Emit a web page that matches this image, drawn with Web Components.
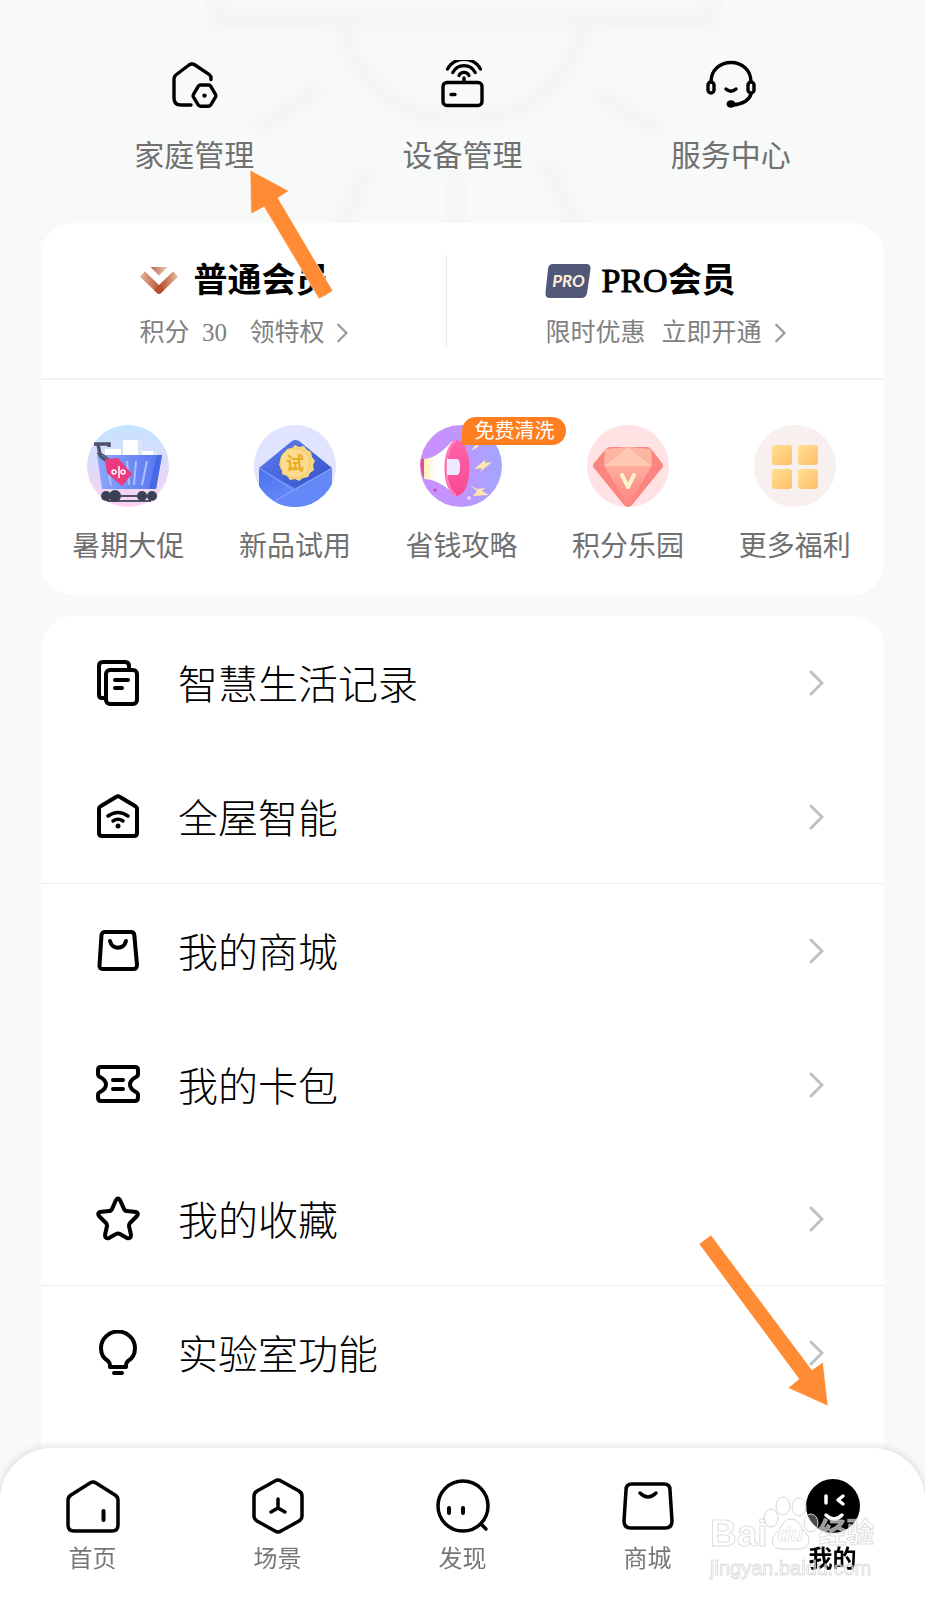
<!DOCTYPE html>
<html lang="zh-CN">
<head>
<meta charset="utf-8">
<meta name="viewport" content="width=device-width, initial-scale=1">
<title>我的</title>
<style>
  body { margin: 0; background: #f9f9f9; font-family: "Liberation Serif", "Noto Sans CJK SC", serif; font-weight: 400; color: #000; }
</style>
</head>
<body>
<mine-page></mine-page>

<script>
const ICONS = {
  family: ['0 0 50 50', `<g fill="none" stroke="#000" stroke-width="3.4" stroke-linecap="round" stroke-linejoin="round"><path d="M42 19.5V18q0-2-1.6-3.3L26 5q-3-2-6 0L6.8 15Q5 16.500 5 19v19q0 7 7 7h10"/><path d="M31.500 25h8q1.500 0 2.300 1.300l4.700 8q.8 1.400 0 2.800l-4.700 7.800q-.8 1.300-2.300 1.300h-8q-1.500 0-2.300-1.300l-4.700-7.800q-.8-1.400 0-2.800l4.700-8q.8-1.300 2.300-1.300z"/></g><circle cx="35.500" cy="35.600" r="2.200"/>`],
  router: ['0 0 50 50', `<g fill="none" stroke="#000" stroke-width="3.400" stroke-linecap="round"><rect x="6" y="22.500" width="39" height="23" rx="4"/><path d="M27 18v4M14 34.500h4"/><path d="M22 15.500a5.500 5.500 0 0 1 10 0M15.800 12.500a12.500 12.500 0 0 1 22.400 0M10.500 9a19 19 0 0 1 33 0" stroke-width="3.200"/></g>`],
  headset: ['0 0 50 50', `<g fill="none" stroke="#000" stroke-width="3.400" stroke-linecap="round"><path d="M5 22C5 10 14 2.500 25 2.500S45 10 45 22M45 34c-2 7-9 10-18 11"/><rect x="2" y="22" width="6" height="11" rx="3"/><rect x="42" y="22" width="6" height="11" rx="3"/><path d="M20 29q5 4.500 10 0"/></g><ellipse cx="25" cy="44" rx="4.500" ry="3.800"/>`],
  medal: ['0 0 38 28', `<defs><linearGradient id="a"><stop stop-color="#e5b29c"/><stop offset=".55" stop-color="#b9532e"/><stop offset="1" stop-color="#e8bba5"/></linearGradient><linearGradient id="b"><stop stop-color="#b9674a"/><stop offset="1" stop-color="#e9cabb"/></linearGradient></defs><path fill="url(#a)" d="M5 4.500 19 18 33 4.500l4.500 4.500q.5.700 0 1.300L21 26q-2 1.800-4 0L.500 10.300Q0 9.700.5 9z"/><path fill="url(#b)" d="M10.500 0h17L19 8.500z"/><path fill="#bb4f2b" d="m19 18-5 5 3 3q2 1.800 4 0l3-3z"/>`],
  proplate: ['0 0 46 34', `<path fill="#505778" d="M8 0h33q5 0 4.500 5L42 29q-.7 5-6 5H5q-5 0-4.500-5L3 5q.5-5 5-5z"/>`],
  cart: ['0 0 82 82', `<defs><linearGradient id="c" x2="0" y2="1"><stop stop-color="#c4e3ff"/><stop offset=".5" stop-color="#dcdcfb"/><stop offset="1" stop-color="#ffd2ef"/></linearGradient><linearGradient id="d"><stop stop-color="#8ca7fb"/><stop offset="1" stop-color="#5474f0"/></linearGradient></defs><circle cx="41" cy="41" r="41" fill="url(#c)"/><path d="M18 24h16v8H18zM53 26h15v6H53z" fill="#fff"/><path fill="#fff" d="M36 15h15v16H36z"/><path fill="#dce5f8" d="M51 15h4v16h-4zM66 26h3v5h-3z"/><path fill="url(#d)" d="M10 30h65l-6 34H15z"/><path fill="#4869e7" d="M70 30h5l-6 34h-7z"/><path d="m21 44 3 16M40 36l2 24M49 36l-2 24M60 36l-5 24" stroke="#aebfff" stroke-width="2"/><g fill="none" stroke="#4f526b"><path d="M22 22v-3H7m4 0 2 11q1 3 10 7" stroke-width="3.500"/><path d="M10 29q4-3 14 8" stroke-width="1.500"/><path d="M17 71h49M20 76h44" stroke-width="2"/></g><path fill="#ec397f" d="m18 34 13-1 14 16-10 12-15-13z"/><g fill="none" stroke="#fff" stroke-width="1.500"><circle cx="27" cy="47" r="2"/><circle cx="36" cy="47" r="2"/><path d="M32 41v12"/></g><g fill="#3c4056"><circle cx="19" cy="71" r="5"/><circle cx="28" cy="71" r="6"/><circle cx="55" cy="71" r="5"/><circle cx="65" cy="71" r="5"/></g>`],
  mail: ['0 0 82 82', `<defs><linearGradient id="e" x2="1" y2="1"><stop stop-color="#5f80f0"/><stop offset="1" stop-color="#3450c4"/></linearGradient><linearGradient id="f" x2="1" y2="1"><stop stop-color="#4d70ef"/><stop offset="1" stop-color="#729bff"/></linearGradient><clipPath id="k"><circle cx="41" cy="41" r="41"/></clipPath></defs><circle cx="41" cy="41" r="41" fill="#e0e4ff"/><g clip-path="url(#k)"><path fill="url(#e)" d="M5 43 38 16q3-2 7 0l33 27v20H5z"/><path fill="#fad782" d="m41 20 4 2 5-1 3 4 4 2 1 5 3 4-2 4 1 5-4 3-2 4-5 1-4 3-4-2-5 1-3-4-5-2v-5l-3-4 2-4v-5l4-3 2-4 5-1z"/><circle cx="41" cy="38" r="15" fill="#fbdc8f" stroke="#f1c964"/><path fill="url(#f)" d="m5 43 36 20 37-20v39H5z"/><path fill="#6488f8" d="M20 76 78 43v39H20z"/><path d="m21 76 57-33M5 43l33 21" stroke="#90a8ff" fill="none"/></g>`],
  horn: ['0 0 82 82', `<defs><linearGradient id="g"><stop stop-color="#cc8eff"/><stop offset=".5" stop-color="#bd97fd"/><stop offset="1" stop-color="#a3a5ff"/></linearGradient><linearGradient id="h"><stop stop-color="#e9508a"/><stop offset=".1" stop-color="#e9508a"/><stop offset=".13" stop-color="#fff3b8"/><stop offset=".5" stop-color="#fff"/></linearGradient><linearGradient id="i" x2="0" y2="1"><stop stop-color="#ff65aa"/><stop offset="1" stop-color="#f84890"/></linearGradient></defs><circle cx="41" cy="41" r="41" fill="url(#g)"/><path fill="url(#h)" d="M1 34q15 1 31-18v51Q17 54 4 54-1 44 1 34z"/><ellipse cx="37" cy="43" rx="12.500" ry="28" fill="url(#i)"/><path fill="none" stroke="#ff84ba" stroke-width="2" d="M36 16c-13 5-13 49 0 54"/><path fill="#eee9ff" d="M27 34h10q3 0 3 8t-3 8H27z"/><g fill="#ffe7ac"><path d="m58 17-7 9 7-4z"/><path d="m65 35-11 9 8-1-2 4 12-10-7 1zM50 60l7 6-4 5 16-1-7-4 3-3-8 1z"/></g><circle cx="49" cy="73" r="2" fill="#f2c9ff"/><circle cx="15" cy="65" r="1.500" fill="#d03da0"/>`],
  gem: ['0 0 82 82', `<defs><linearGradient id="j" x2="0" y2="1"><stop stop-color="#ffc0aa"/><stop offset="1" stop-color="#ff8380"/></linearGradient></defs><circle cx="41" cy="41" r="41" fill="#ffe2e3"/><path fill="#fb8581" d="m23 22h37q3 0 5 3l10 13q2 3 0 5L45 80q-4 4-8 0L7 43q-2-2 0-5l11-13q2-3 5-3z"/><path fill="url(#j)" d="m41 22 24 18-24 42-24-42z"/><path fill="#ffb6a1" d="m18 24 23-2-24 18zM64 24l-23-2 24 18z"/><path fill="#ffc8b5" d="m41 22 24 19H17z"/><path fill="none" stroke="#fff4ce" stroke-width="4" stroke-linecap="round" stroke-linejoin="round" d="m35 50 6 12 6-12"/>`],
  grid: ['0 0 82 82', `<defs><linearGradient id="l" x2="1" y2="1"><stop stop-color="#ffe194"/><stop offset="1" stop-color="#ffbd67"/></linearGradient></defs><circle cx="41" cy="41" r="41" fill="#f8f0ee"/><g fill="url(#l)"><rect x="18" y="20" width="20" height="20" rx="3"/><rect x="44" y="20" width="20" height="20" rx="3"/><rect x="18" y="44" width="20" height="20" rx="3"/><rect x="44" y="44" width="20" height="20" rx="3"/></g>`],
  records: ['0 0 44 46', `<g fill="none" stroke="#000" stroke-width="4" stroke-linecap="round" stroke-linejoin="round"><rect x="10" y="10" width="31" height="34" rx="4"/><path d="M8 38H6q-3 0-3-3V6q0-4 4-4h22q4 0 4 4v3M19 20h13M19 28h7"/></g>`],
  smarthome: ['0 0 44 46', `<g fill="none" stroke="#000" stroke-width="4" stroke-linecap="round" stroke-linejoin="round"><path d="M3 39V15q0-2 2-3L20 3q2-1.500 4 0l15 9q2 1 2 3v24q0 3-3 3H6q-3 0-3-3z"/><path d="M12 22q10-7 20 0M17 27q5-3.500 10 0" stroke-width="3.500"/></g><circle cx="22" cy="32" r="2.500"/>`],
  bag: ['0 0 44 46', `<g fill="none" stroke="#000" stroke-width="4" stroke-linecap="round" stroke-linejoin="round"><path d="M9 4h26q3 0 3.300 3L41 37q.3 4-4 4H7q-4 0-3.500-4L5.500 7Q6 4 9 4z"/><path d="M14 13c2 9 14 9 16 0"/></g>`],
  ticket: ['0 0 44 46', `<g fill="none" stroke="#000" stroke-width="4" stroke-linecap="round" stroke-linejoin="round"><path d="M5 5h34q3 0 3 3v4q0 2-2 3-6 3-6 7.500t6 7.500q2 1 2 3v2q0 4-3 4H5q-3 0-3-4v-2q0-2 2-3 6-3 6-7.500T4 15q-2-1-2-3V8q0-3 3-3zM17 18h10M17 27h10"/></g>`],
  star: ['0 0 44 46', `<path fill="none" stroke="#000" stroke-width="4" stroke-linejoin="round" d="M20 4q2-3 4 0l4 9q1 2 3 2l9 1q3 1 1 4l-7 7q-1 1-1 3l2 9q0 4-4 3l-7-4q-2-1-4 0l-7 4q-4 1-4-3l2-9q0-2-1-3l-7-7q-2-3 1-4l9-1q2 0 3-2z"/>`],
  bulb: ['0 0 44 46', `<g fill="none" stroke="#000" stroke-width="4" stroke-linecap="round" stroke-linejoin="round"><path d="M14 37v-2q0-2-2-4C7 28 5 23 5 18a17 16.500 0 0 1 34 0c0 5-2 10-7 13q-2 2-2 4v2zM18 43h8"/></g>`],
  chevron: ['0 0 16 26', `<path fill="none" stroke="currentColor" stroke-width="3" stroke-linecap="round" stroke-linejoin="miter" d="M3 2 14 13 3 24"/>`],
  home: ['0 0 56 56', `<g fill="none" stroke="#000" stroke-width="3.500" stroke-linecap="round" stroke-linejoin="round"><path d="M3 47V22q0-3 3-5L25 5q3-2 6 0l19 12q3 2 3 5v25q0 6-6 6H9q-6 0-6-6z"/><path d="M38.500 33v9" stroke-width="4"/></g>`],
  scene: ['0 0 56 56', `<g fill="none" stroke="#000" stroke-width="3.500" stroke-linecap="round" stroke-linejoin="round"><path d="m31 3 18 10q3 2 3 5v20q0 3-3 5L31 53q-3 2-6 0L7 43q-3-2-3-5V18q0-3 3-5L25 3q3-2 6 0z"/><path d="M28 21v9l-7 4m7-4 7 4" stroke-width="3.500"/></g>`],
  discover: ['0 0 56 56', `<g fill="none" stroke="#000" stroke-width="3.500" stroke-linecap="round"><circle cx="28" cy="28" r="25"/><path d="M14 30v5M28 30v5" stroke-width="4"/><path d="m46 46 5 5"/></g>`],
  shop: ['0 0 56 56', `<g fill="none" stroke="#000" stroke-width="3.500" stroke-linecap="round" stroke-linejoin="round"><path d="M12 6h32q6 0 6 6l2 31q0 7-7 7H11q-7 0-7-7l2-31q0-6 6-6z"/><path d="M20 15q8 8 16 0"/></g>`],
  me: ['0 0 56 56', `<circle cx="28" cy="28" r="27"/><g fill="none" stroke="#fff" stroke-width="3.500" stroke-linecap="round" stroke-linejoin="round"><path d="M21 18v7M38 18l-5 4 5 4M21 37q8 8 16 0"/></g>`]
};

const define = (name, html, fill) => customElements.define(name, class extends HTMLElement {
  constructor() {
    super();
    this.attachShadow({ mode: 'open' }).innerHTML = html;
  }
  connectedCallback() { if (fill) fill(this, this.shadowRoot); }
});

define('ui-icon', `<style>:host{display:block;flex:none}svg{display:block;width:100%;height:100%}</style><svg aria-hidden="true"></svg>`, (host, root) => {
  const [box, art] = ICONS[host.getAttribute('name')];
  const svg = root.querySelector('svg');
  svg.setAttribute('viewBox', box);
  svg.innerHTML = art;
});

const setIcon = (host, root) => {
  const icon = document.createElement('ui-icon');
  icon.setAttribute('name', host.getAttribute('icon'));
  root.querySelector('.icon').append(icon);
};

define('quick-link', `<style>
  :host{display:block}
  a{display:flex;flex-direction:column;align-items:center;gap:26px;color:#707070;text-decoration:none;font-size:30px;line-height:40px}
  .icon{width:50px;height:50px}
</style><a href="#"><span class="icon"></span><slot></slot></a>`, setIcon);

define('page-header', `<style>
  :host{display:block;position:relative;background:linear-gradient(90deg,#f9f9f9,#f7faf9 20%,#f7faf9 80%,#f9f9f9)}
  nav{position:relative;display:grid;grid-template-columns:repeat(3,1fr);padding:60px 60px 47px}
  svg{position:absolute;inset:0;width:100%;height:100%}
</style>
<svg viewBox="0 0 925 223" preserveAspectRatio="xMidYMin slice" aria-hidden="true">
  <defs><filter id="soft"><feGaussianBlur stdDeviation="6"/></filter></defs>
  <g filter="url(#soft)" fill="none" stroke="#f3f4f4" stroke-width="14">
    <path fill="#f9f9f9" d="M342 18v-10a121 112 0 0 0 242 0v10"/>
    <path fill="#f9f9f9" d="M216-20V18H712V-20"/>
    <path d="m321 88-66 42M592 92l70 40M366 170l-24 60M456 170v60M546 160l32 70"/>
  </g>
</svg>
<nav><slot></slot></nav>`);

define('member-tier', `<style>
  :host{display:flex;justify-content:center}
  a{display:block;padding-top:4px;color:#000;text-decoration:none}
  .head{display:flex;align-items:center;gap:16px}
  :host([pro]) .head{gap:10px}
  .icon{width:38px;height:28px;display:grid;place-items:center}
  :host([pro]) .icon{width:46px;height:34px}
  .icon ui-icon{grid-area:1/1;width:100%}
  .mark{display:none;position:relative;z-index:1;grid-area:1/1;font:italic 700 17px/34px Lato,sans-serif;color:#fff0d8}
  :host([pro]) .mark{display:block}
  b{font-size:34px;line-height:44px;font-weight:700}
  .sub{display:flex;align-items:center;gap:16px;margin-top:12px;font-size:25px;line-height:36px;color:#808080}
  .sub ui-icon{width:12px;height:20px;margin-left:-4px;color:#999}
</style>
<a href="#"><div class="head"><span class="icon"><span class="mark">PRO</span></span><b><slot name="title"></slot></b></div>
<div class="sub"><slot name="left"></slot><slot name="right"></slot><ui-icon name="chevron"></ui-icon></div></a>`, setIcon);

define('perk-link', `<style>
  :host{display:block}
  a{display:flex;flex-direction:column;align-items:center;gap:20px;color:#707070;text-decoration:none;font-size:28px;line-height:40px}
  .icon{position:relative;width:82px;height:82px}
  .badge,.seal{display:none;position:absolute;white-space:nowrap}
  :host([badge]) .badge{display:block;left:42px;top:-8px;padding:0 12px;border-radius:14px 14px 14px 2px;background:#ff7f20;color:#fff;font-size:20px;line-height:28px}
  :host([seal]) .seal{display:block;inset:0;text-align:center;color:#e9ab20;font-size:18px;font-weight:700;line-height:78px}
</style><a href="#"><span class="icon"><span class="badge"></span><span class="seal"></span></span><slot></slot></a>`, (host, root) => {
  const icon = document.createElement('ui-icon');
  icon.setAttribute('name', host.getAttribute('icon'));
  root.querySelector('.icon').prepend(icon);
  root.querySelector('.badge').textContent = host.getAttribute('badge') || '';
  root.querySelector('.seal').textContent = host.getAttribute('seal') || '';
});

define('member-card', `<style>
  :host{display:block;background:#fff;border-radius:32px}
  .tiers{display:grid;grid-template-columns:406fr 437fr;padding:32px 0 31px;border-bottom:2px solid #f1f2f3}
  .tiers ::slotted(*){height:92px}
  .tiers ::slotted([pro]){box-shadow:-1px 0 #e9e9e9}
  .perks{display:grid;grid-template-columns:repeat(5,1fr);padding:45px 6px 28px 4px}
</style><div class="tiers"><slot name="tier"></slot></div><div class="perks"><slot></slot></div>`);

define('menu-row', `<style>
  :host{display:block}
  :host([divided]){box-shadow:0 -1px #ededee}
  a{display:flex;align-items:center;height:134px;padding:0 60px 0 55px;color:#000;text-decoration:none;font-size:40px;font-weight:300;line-height:56px}
  .icon{width:44px;height:46px;margin-right:38px}
  .text{padding-top:6px}
  .chev{width:16px;height:26px;margin-left:auto;color:#bfc0c3}
</style><a href="#"><span class="icon"></span><span class="text"><slot></slot></span><ui-icon class="chev" name="chevron"></ui-icon></a>`, setIcon);

define('menu-card', `<style>:host{display:block;background:#fff;border-radius:32px 32px 0 0;padding-bottom:178px;box-sizing:border-box}</style><slot></slot>`);

define('tab-item', `<style>
  :host{display:block}
  a{display:flex;flex-direction:column;align-items:center;gap:8px;color:#777;text-decoration:none;font-size:24px;line-height:34px}
  :host([active]) a{color:#000;font-weight:700}
  .icon{width:56px;height:56px}
</style><a href="#"><span class="icon"></span><slot></slot></a>`, setIcon);

define('tab-bar', `<style>
  :host{position:fixed;left:0;right:0;bottom:0;background:#fff;border-radius:52px 52px 0 0;box-shadow:0 -1px 8px rgba(0,0,0,.14)}
  nav{display:grid;grid-template-columns:repeat(5,1fr);padding:30px 0 24px}
</style><nav><slot></slot></nav>`);

define('arrow-mark', `<style>:host{position:absolute;z-index:3;pointer-events:none}svg{display:block;overflow:visible}</style><svg aria-hidden="true"><polygon fill="#ff8c35" stroke="#fff" stroke-opacity=".6" stroke-width="1"/></svg>`, (host, root) => {
  const svg = root.querySelector('svg');
  svg.setAttribute('width', host.getAttribute('width'));
  svg.setAttribute('height', host.getAttribute('height'));
  root.querySelector('polygon').setAttribute('points', host.getAttribute('points'));
});

define('water-mark', `<style>
  :host{position:fixed;right:50px;bottom:20px;width:165px;z-index:4;pointer-events:none;font-family:"Liberation Sans","Noto Sans CJK SC",sans-serif;color:rgba(255,255,255,.6);-webkit-text-stroke:1px rgba(200,200,200,.6)}
  .brand{display:flex;align-items:center;font-size:37px;font-weight:700;line-height:36px}
  .paw{position:relative;display:grid;place-items:center;width:46px;height:36px;font-size:21px;font-style:italic}
  .paw svg{position:absolute;left:-6px;bottom:2px;width:58px;height:54px}
  .cn{font-size:28px;margin-left:5px}
  .url{font-size:20px;line-height:24px;margin-top:4px}
</style>
<div class="brand"><span>Bai</span><span class="paw"><svg viewBox="0 0 58 54" fill="#fff" fill-opacity=".3" stroke="#d4d4d4" aria-hidden="true"><ellipse cx="9" cy="22" rx="7" ry="9"/><ellipse cx="21" cy="10" rx="7" ry="9"/><ellipse cx="37" cy="11" rx="7" ry="9"/><ellipse cx="49" cy="27" rx="7" ry="9"/><path d="M29 23c8 0 9 8 15 14 7 8 1 17-8 16H20c-11 0-12-10-6-16 6-5 7-14 15-14z"/></svg><span>du</span></span><span class="cn">经验</span></div>
<div class="url">jingyan.baidu.com</div>`);

define('mine-page', `<style>
  :host{display:flex;flex-direction:column;min-height:100vh;position:relative}
  main{flex:1;display:flex;flex-direction:column;gap:21px;padding:0 41px}
  menu-card{flex:1}
  .latin{font-weight:400;-webkit-text-stroke:1px #000}
  .to-family{left:250px;top:170px}
  .to-me{right:97px;top:1235px}
</style>
<page-header>
  <quick-link icon="family">家庭管理</quick-link>
  <quick-link icon="router">设备管理</quick-link>
  <quick-link icon="headset">服务中心</quick-link>
</page-header>
<main>
  <member-card>
    <member-tier slot="tier" icon="medal"><span slot="title">普通会员</span><span slot="left">积分&nbsp; 30</span><span slot="right">&nbsp;领特权</span></member-tier>
    <member-tier slot="tier" icon="proplate" pro><span slot="title"><span class="latin">PRO</span>会员</span><span slot="left">限时优惠</span><span slot="right">立即开通</span></member-tier>
    <perk-link icon="cart">暑期大促</perk-link>
    <perk-link icon="mail" seal="试">新品试用</perk-link>
    <perk-link icon="horn" badge="免费清洗">省钱攻略</perk-link>
    <perk-link icon="gem">积分乐园</perk-link>
    <perk-link icon="grid">更多福利</perk-link>
  </member-card>
  <menu-card>
    <menu-row icon="records">智慧生活记录</menu-row>
    <menu-row icon="smarthome">全屋智能</menu-row>
    <menu-row icon="bag" divided>我的商城</menu-row>
    <menu-row icon="ticket">我的卡包</menu-row>
    <menu-row icon="star">我的收藏</menu-row>
    <menu-row icon="bulb" divided>实验室功能</menu-row>
  </menu-card>
</main>
<tab-bar>
  <tab-item icon="home">首页</tab-item>
  <tab-item icon="scene">场景</tab-item>
  <tab-item icon="discover">发现</tab-item>
  <tab-item icon="shop">商城</tab-item>
  <tab-item icon="me" active>我的</tab-item>
</tab-bar>
<water-mark></water-mark>
<arrow-mark class="to-family" width="83" height="129" points="0,0 39,21 28,28 83,121 69,129 14,37 1,44"></arrow-mark>
<arrow-mark class="to-me" width="129" height="171" points="0,9 12,0 113,135 124,127 129,171 89,153 100,144"></arrow-mark>`);
</script>
</body>
</html>
